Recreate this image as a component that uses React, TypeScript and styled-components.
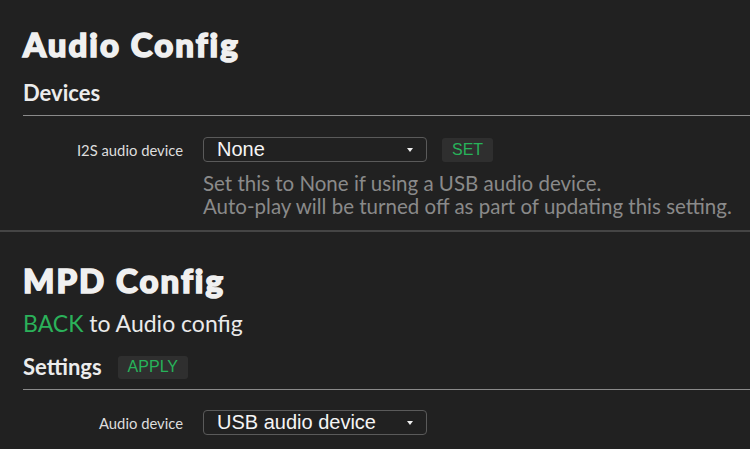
import React from "react";
import styled, { createGlobalStyle } from "styled-components";

const Global = createGlobalStyle`
  html, body { margin: 0; padding: 0; background: #212121; }
  body { font-family: Lato, "Noto Sans", sans-serif; color: #eeeeee; }
  * { box-sizing: border-box; }
`;

const Page = styled.div`
  width: 750px;
  height: 449px;
  overflow: hidden;
  background: #212121;
  display: flex;
  flex-direction: column;
`;

const Section = styled.section`
  padding: 0 0 0 23px;
  display: flex;
  flex-direction: column;
`;

const Title = styled.h1`
  margin: 0;
  font-family: "Lato Black", Lato, sans-serif;
  font-weight: 900;
  font-size: 33px;
  line-height: 40px;
  color: #f0f0f0;
  letter-spacing: 2px;
  -webkit-text-stroke: 1.6px #f0f0f0;
`;

const SubHeader = styled.div`
  display: flex;
  align-items: center;
  gap: 16px;
  padding-bottom: 8px;
  border-bottom: 1px solid #8a8a8a;
`;

const SubTitle = styled.h2`
  margin: 0;
  font-family: Lato, sans-serif;
  font-weight: 700;
  font-size: 22px;
  line-height: 28px;
  color: #ececec;
`;

const Row = styled.div`
  display: grid;
  grid-template-columns: 160px 1fr;
  column-gap: 20px;
  row-gap: 10px;
  align-items: center;
`;

const Label = styled.span`
  font-size: 14.8px;
  color: #dddddd;
  text-align: right;
`;

const Controls = styled.div`
  display: flex;
  align-items: center;
  gap: 15px;
`;

const SelectBox = styled.div`
  width: 224px;
  height: 25px;
  border: 1px solid #5a5a5a;
  border-radius: 4px;
  display: flex;
  align-items: center;
  justify-content: space-between;
  padding: 0 13px 0 13px;
  font-family: "Liberation Sans", Arial, sans-serif;
  font-size: 20px;
  color: #f5f5f5;
`;

const Caret = styled.span`
  width: 0;
  height: 0;
  border-left: 3.5px solid transparent;
  border-right: 3.5px solid transparent;
  border-top: 4px solid #f0f0f0;
`;

const Button = styled.button<{ $h: number }>`
  border: none;
  background: #2f2f2f;
  border-radius: 3px;
  color: #27b35a;
  font-family: "Liberation Sans", Arial, sans-serif;
  font-size: 16px;
  height: ${(p) => p.$h}px;
  padding: 0 10px;
  line-height: 1;
  cursor: pointer;
`;

const Help = styled.div`
  grid-column: 2;
  font-size: 20.5px;
  line-height: 23px;
  color: #8a8a8a;
  white-space: nowrap;
`;

const Separator = styled.hr`
  margin: 0;
  border: none;
  height: 2px;
  background: #454545;
  width: 100%;
  flex: none;
`;

const BackLine = styled.div`
  font-size: 23px;
  line-height: 28px;
  color: #eaeaea;
`;

const Link = styled.a`
  color: #2bb15a;
  text-decoration: none;
`;

const Spacer = styled.div<{ $h: number }>`
  height: ${(p) => p.$h}px;
  flex: none;
`;

export default function App() {
  return (
    <Page>
      <Global />
      <Section>
        <Spacer $h={24} />
        <Title>Audio Config</Title>
        <Spacer $h={15} />
        <SubHeader>
          <SubTitle>Devices</SubTitle>
        </SubHeader>
        <Spacer $h={21} />
        <Row>
          <Label>I2S audio device</Label>
          <Controls>
            <SelectBox>
              <span>None</span>
              <Caret />
            </SelectBox>
            <Button $h={24}>SET</Button>
          </Controls>
          <Help>
            Set this to None if using a USB audio device.
            <br />
            Auto-play will be turned off as part of updating this setting.
          </Help>
        </Row>
        <Spacer $h={12} />
      </Section>
      <Separator />
      <Section>
        <Spacer $h={28} />
        <Title>MPD Config</Title>
        <Spacer $h={9} />
        <BackLine>
          <Link href="#">BACK</Link> to Audio config
        </BackLine>
        <Spacer $h={16} />
        <SubHeader>
          <SubTitle>Settings</SubTitle>
          <Button $h={23}>APPLY</Button>
        </SubHeader>
        <Spacer $h={20} />
        <Row>
          <Label>Audio device</Label>
          <Controls>
            <SelectBox>
              <span>USB audio device</span>
              <Caret />
            </SelectBox>
          </Controls>
        </Row>
      </Section>
    </Page>
  );
}
